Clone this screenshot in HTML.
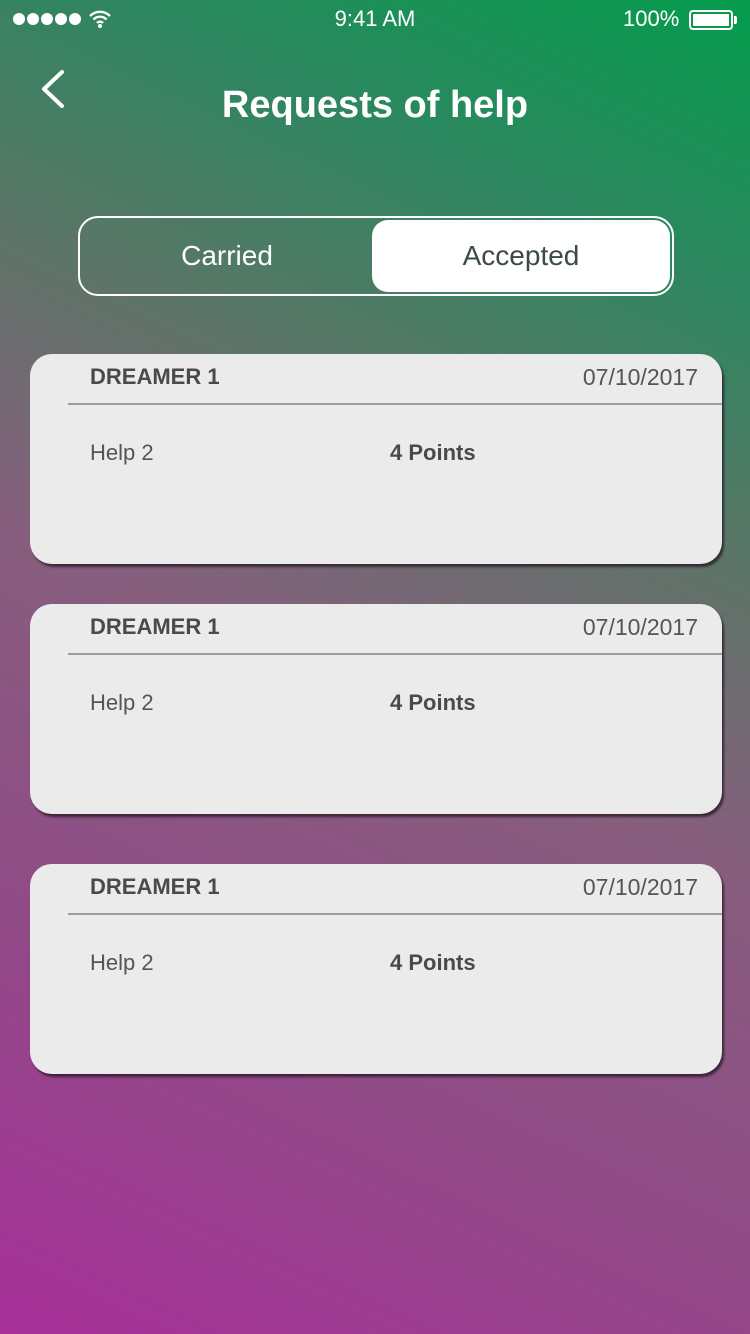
<!DOCTYPE html>
<html><head><meta charset="utf-8"><style>
*{margin:0;padding:0;box-sizing:border-box}
body{width:750px;height:1334px;overflow:hidden;font-family:"Liberation Sans",sans-serif;background:linear-gradient(205deg,#049c4c 0%,#2e8660 18%,#5f7468 35%,#875e7e 52%,#904a86 75%,#a8309a 100%);position:relative;color:#fff}
.abs{position:absolute}
.dot{position:absolute;top:13px;width:12px;height:12px;border-radius:50%;background:#fff}
.card{position:absolute;left:30px;width:692px;height:210px;background:#ebebeb;border-radius:22px;box-shadow:2px 3px 2px rgba(30,20,30,.7);color:#4a4a4a}
.card .n{position:absolute;left:60px;top:10px;font-weight:bold;font-size:22px}
.card .d{position:absolute;right:24px;top:10px;font-size:23px;color:#555}
.card .l{position:absolute;left:38px;right:0;top:49px;height:2px;background:#9c9c9c}
.card .h{position:absolute;left:60px;top:86px;font-size:22px;color:#555}
.card .p{position:absolute;left:360px;top:86px;font-size:22px;font-weight:bold}
</style></head><body>
<div class="dot" style="left:13px"></div><div class="dot" style="left:27px"></div><div class="dot" style="left:41px"></div><div class="dot" style="left:55px"></div><div class="dot" style="left:69px"></div>
<svg class="abs" style="left:88px;top:9px" width="24" height="20" viewBox="0 0 24 20"><path d="M2 7a14 14 0 0 1 20 0M5.5 10.5a9 9 0 0 1 13 0M9 14a4 4 0 0 1 6 0" stroke="#fff" stroke-width="2.4" fill="none"/><circle cx="12" cy="17" r="2" fill="#fff"/></svg>
<div class="abs" style="left:0;width:750px;text-align:center;top:6px;font-size:22px">9:41 AM</div>
<div class="abs" style="left:623px;top:6px;font-size:22px">100%</div>
<div class="abs" style="left:689px;top:10px;width:44px;height:20px;border:2px solid #fff;border-radius:4px;padding:2px"><div style="background:#fff;width:100%;height:100%;border-radius:1px"></div></div>
<div class="abs" style="left:734px;top:16px;width:3px;height:8px;background:#fff;border-radius:0 2px 2px 0"></div>
<svg class="abs" style="left:38px;top:68px" width="30" height="42"><path d="M24 4L6 21l18 17" stroke="#fff" stroke-width="4" fill="none" stroke-linecap="round" stroke-linejoin="round"/></svg>
<div class="abs" style="left:0;width:750px;text-align:center;top:84px;font-size:38px;font-weight:bold">Requests of help</div>
<div class="abs" style="left:78px;top:216px;width:596px;height:80px;border:2px solid #fff;border-radius:20px"></div>
<div class="abs" style="left:372px;top:220px;width:298px;height:72px;background:#fff;border-radius:16px"></div>
<div class="abs" style="left:80px;width:294px;text-align:center;top:240px;font-size:28px">Carried</div>
<div class="abs" style="left:372px;width:298px;text-align:center;top:240px;font-size:28px;color:#3d4a45">Accepted</div>
<div class="card" style="top:354px"><div class="n">DREAMER 1</div><div class="d">07/10/2017</div><div class="l"></div><div class="h">Help 2</div><div class="p">4 Points</div></div>
<div class="card" style="top:604px"><div class="n">DREAMER 1</div><div class="d">07/10/2017</div><div class="l"></div><div class="h">Help 2</div><div class="p">4 Points</div></div>
<div class="card" style="top:864px"><div class="n">DREAMER 1</div><div class="d">07/10/2017</div><div class="l"></div><div class="h">Help 2</div><div class="p">4 Points</div></div>
</body></html>
